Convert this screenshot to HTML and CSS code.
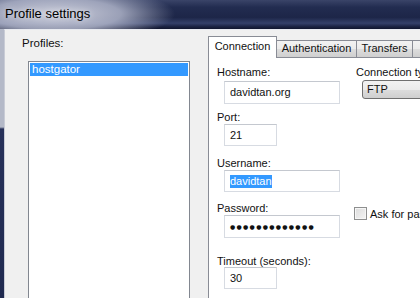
FILE: index.html
```html
<!DOCTYPE html>
<html lang="en">
<head>
  <meta charset="UTF-8" />
  <title>Profile settings</title>
  <link rel="stylesheet" href="styles.css">
</head>
<body>
  <div class="window">
    <div class="titlebar">
      <span class="title">Profile settings</span>
    </div>
    <div class="frame">
      <div class="client">
        <div class="profiles">
          <div class="profiles-label">Profiles:</div>
          <div class="listbox">
            <div class="list-item selected">hostgator</div>
          </div>
        </div>

        <div class="tabs-area">
          <div class="tabstrip">
            <div class="tab active">Connection</div>
            <div class="tab tab-auth">Authentication</div>
            <div class="tab tab-transfers">Transfers</div>
            <div class="tab tab-more"></div>
          </div>
          <div class="panel">
            <div class="field f-host">
              <div class="field-label">Hostname:</div>
              <div class="textbox wide">davidtan.org</div>
            </div>
            <div class="side s-type">
              <div class="field-label">Connection type:</div>
              <div class="combo">FTP</div>
            </div>
            <div class="field f-port">
              <div class="field-label">Port:</div>
              <div class="textbox narrow">21</div>
            </div>
            <div class="field f-user">
              <div class="field-label">Username:</div>
              <div class="textbox wide"><span class="sel-text">davidtan</span></div>
            </div>
            <div class="field f-pass">
              <div class="field-label">Password:</div>
              <div class="textbox wide tall dots">●●●●●●●●●●●●●</div>
            </div>
            <div class="side s-ask">
              <span class="checkbox"></span>
              <span class="check-label">Ask for password</span>
            </div>
            <div class="field f-timeout">
              <div class="field-label">Timeout (seconds):</div>
              <div class="textbox narrow">30</div>
            </div>
          </div>
        </div>
      </div>
    </div>
  </div>
</body>
</html>
```

FILE: styles.css
```css
* { box-sizing: border-box; }
html, body {
  margin: 0;
  padding: 0;
}
body {
  width: 420px;
  height: 298px;
  overflow: hidden;
  background: #f0f0f0;
  font-family: "Liberation Sans", Arial, sans-serif;
  font-size: 11px;
  color: #111;
}
.window {
  display: flex;
  flex-direction: column;
  height: 298px;
}
.titlebar {
  height: 29px;
  flex: none;
  display: flex;
  align-items: center;
  padding: 0 0 2px 5px;
  background:
    radial-gradient(ellipse 120px 28px at 55px 14px, rgba(214,216,228,0.95) 0, rgba(176,181,202,0.85) 55%, rgba(70,80,120,0) 100%),
    linear-gradient(to bottom, #3a4468 0, #222c50 25%, #1d2648 60%, #34406a 80%, #1a2242 92%, #10152e 100%);
}
.title {
  font-size: 13px;
  color: #000;
  text-shadow: 0 0 6px rgba(255,255,255,0.7);
}
.frame {
  flex: 1;
  display: flex;
  padding-left: 4px;
  background: linear-gradient(to bottom, #b4b9c8 0, #b4b9c8 98px, #27315a 100px, #202a50 100%);
}
.client {
  flex: 1;
  display: flex;
  background: #f0f0f0;
  border-left: 1px solid #c9ccd6;
  border-top: 1px solid #e8eaf0;
}
.profiles {
  width: 203px;
  flex: none;
  padding: 6px 0 0 17px;
  display: flex;
  flex-direction: column;
}
.profiles-label {
  line-height: 14px;
  font-size: 11.5px;
}
.listbox {
  flex: 1;
  margin: 11px 0 0 6px;
  width: 162px;
  background: #fff;
  border: 1px solid #828790;
  border-bottom: none;
  padding: 1px;
}
.list-item {
  height: 13px;
  line-height: 13px;
  padding-left: 2px;
  font-size: 11.5px;
}
.list-item.selected {
  background: #3399ff;
  color: #fff;
}

.tabs-area {
  flex: 1;
  padding-top: 6px;
  display: flex;
  flex-direction: column;
  min-width: 0;
}
.tabstrip {
  display: flex;
  align-items: flex-end;
  height: 21px;
  position: relative;
  z-index: 1;
}
.tab {
  flex: none;
  height: 17px;
  line-height: 15px;
  text-align: center;
  border: 1px solid #898c95;
  border-bottom: none;
  border-left: none;
  background: linear-gradient(to bottom, #f2f2f2 0, #ebebeb 50%, #dddddd 51%, #cfcfcf 100%);
  white-space: nowrap;
}
.tab.active {
  width: 69px;
  height: 22px;
  line-height: 19px;
  border-left: 1px solid #898c95;
  background: #fff;
  margin-bottom: -1px;
}
.tab-auth { width: 80px; }
.tab-transfers { width: 56px; }
.tab-more { width: 80px; }

.panel {
  flex: 1;
  width: 260px;
  background: #fff;
  border: 1px solid #898c95;
  border-bottom: none;
  border-right: none;
  padding: 8px 0 0 8px;
  display: grid;
  grid-template-columns: 136px 1fr;
  align-content: start;
}
.field { grid-column: 1; }
.side { grid-column: 2; }
.field-label {
  line-height: 13px;
  white-space: nowrap;
}
.textbox {
  margin-left: 7px;
  height: 22px;
  line-height: 20px;
  padding: 0 5px;
  background: #fff;
  border: 1px solid #d7dbe2;
  border-top-color: #c4c8cf;
  white-space: nowrap;
  overflow: hidden;
}
.textbox.wide { width: 116px; }
.textbox.narrow { width: 53px; }
.textbox.tall { height: 23px; line-height: 21px; }
.f-host .textbox { margin-top: 2px; height: 23px; line-height: 21px; }
.f-port { margin-top: 7px; }
.f-user { margin-top: 11px; }
.f-pass { margin-top: 10px; }
.f-timeout { margin-top: 17px; }
.f-timeout .textbox { margin-top: -1px; }

.sel-text {
  background: #3399ff;
  color: #fff;
  display: inline-block;
  line-height: 13px;
}
.dots {
  font-family: "DejaVu Sans", sans-serif;
  font-size: 6px;
  letter-spacing: 1.3px;
  color: #111;
}

.s-type {
  grid-row: 1;
  padding-left: 3px;
  white-space: nowrap;
}
.combo {
  margin: 1px 0 0 6px;
  width: 90px;
  height: 19px;
  line-height: 17px;
  padding-left: 4px;
  border: 1px solid #707070;
  border-radius: 3px;
  background: linear-gradient(to bottom, #f2f2f2 0, #ebebeb 50%, #dddddd 51%, #cfcfcf 100%);
}
.s-ask {
  grid-row: 4;
  align-self: start;
  margin-top: 15px;
  padding-left: 1px;
  display: flex;
  align-items: center;
  white-space: nowrap;
}
.checkbox {
  width: 13px;
  height: 13px;
  flex: none;
  border: 1px solid #8e8f8f;
  background: linear-gradient(135deg, #dcdcdc 0, #f4f4f4 100%);
  box-shadow: inset 0 0 0 1px #f6f6f6;
  margin-right: 3px;
}
```
